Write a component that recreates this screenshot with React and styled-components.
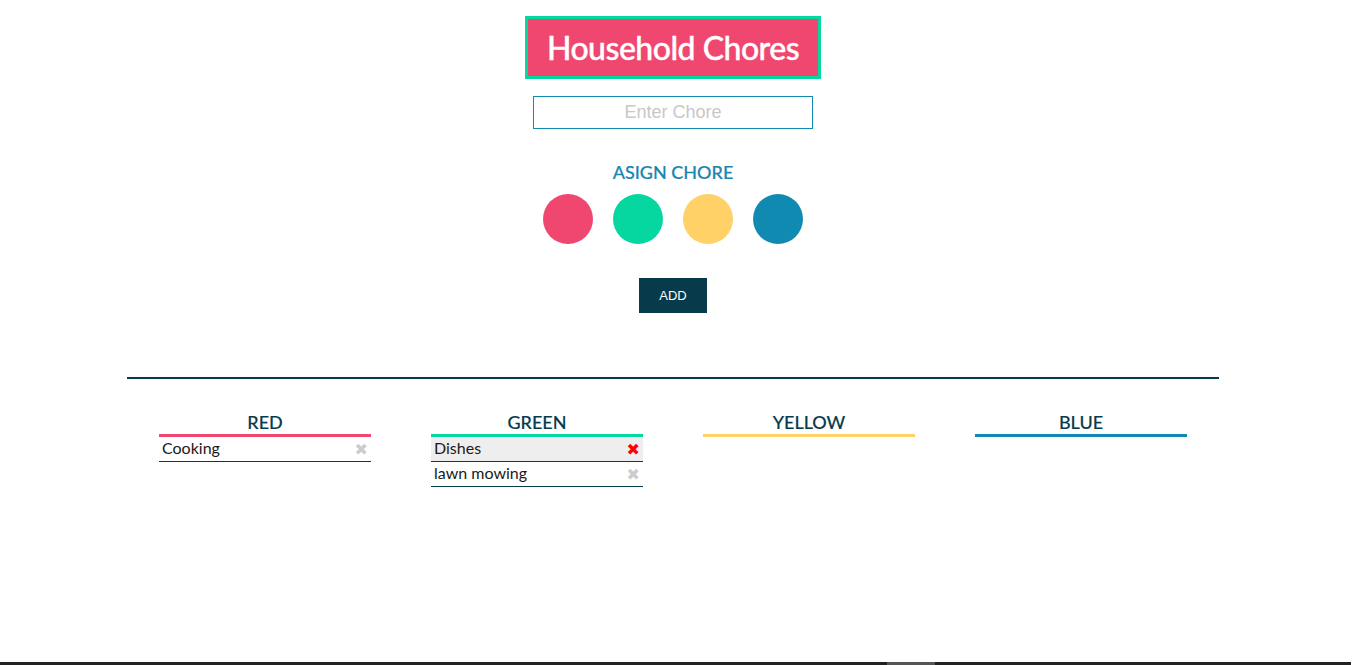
import React from "react";
import styled, {createGlobalStyle} from "styled-components";

const GlobalStyle = createGlobalStyle`
    body {
        margin: 0;
        background: #fff;
        font-family: Lato, "Noto Sans", sans-serif;
    }
`;

const swatches = [
    {name: "red", color: "#EF476F"},
    {name: "green", color: "#06D6A0"},
    {name: "yellow", color: "#FFD166"},
    {name: "blue", color: "#118AB2"},
];

const chores = {
    red: [{text: "Cooking"}],
    green: [{text: "Dishes", hover: true}, {text: "lawn mowing"}],
    yellow: [],
    blue: [],
};

function App() {
    return (
        <Page>
            <GlobalStyle/>
            <Header>
                <Title>Household Chores</Title>
                <ChoreInput type="text" placeholder="Enter Chore"/>
                <AssignLabel>ASIGN CHORE</AssignLabel>
                <SwatchRow>
                    {swatches.map((s) => (
                        <Swatch key={s.name} $color={s.color}/>
                    ))}
                </SwatchRow>
                <AddButton>ADD</AddButton>
            </Header>

            <Divider/>

            <Board>
                {swatches.map((s) => (
                    <Column key={s.name}>
                        <ColumnTitle $color={s.color}>{s.name.toUpperCase()}</ColumnTitle>
                        {chores[s.name].map((c) => (
                            <ChoreRow key={c.text} $hover={c.hover}>
                                <ChoreText>{c.text}</ChoreText>
                                <Remove $hover={c.hover}>✖</Remove>
                            </ChoreRow>
                        ))}
                    </Column>
                ))}
            </Board>

            <ScrollTrack>
                <ScrollThumb/>
            </ScrollTrack>
        </Page>
    );
}

export default App;

const Page = styled.div`
    width: 1346px;
    min-height: 665px;
`;

const Header = styled.header`
    display: flex;
    flex-direction: column;
    align-items: center;
    padding-top: 16px;
`;

const Title = styled.h1`
    margin: 0;
    height: 63px;
    box-sizing: border-box;
    display: flex;
    align-items: center;
    padding: 0 19px;
    background: #EF476F;
    border: 3px solid #06D6A0;
    color: #fff;
    font-size: 32px;
    font-weight: 500;
    letter-spacing: -0.5px;
    -webkit-text-stroke: 0.4px #fff;
`;

const ChoreInput = styled.input`
    margin-top: 17px;
    width: 280px;
    height: 33px;
    box-sizing: border-box;
    border: 1px solid #118AB2;
    outline: none;
    text-align: center;
    font-family: "Liberation Sans", Arial, sans-serif;
    font-size: 18px;

    &::placeholder {
        color: #c8c8c8;
    }
`;

const AssignLabel = styled.h3`
    margin: 33px 0 0;
    color: #1a86b0;
    font-size: 18px;
    font-weight: 500;
    line-height: 20px;
    -webkit-text-stroke: 0.2px #1a86b0;
`;

const SwatchRow = styled.div`
    display: flex;
    gap: 20px;
    margin-top: 12px;
`;

const Swatch = styled.div`
    width: 50px;
    height: 50px;
    border-radius: 50%;
    background: ${(p) => p.$color};
`;

const AddButton = styled.button`
    margin-top: 34px;
    width: 68px;
    height: 35px;
    border: none;
    background: #073B4C;
    color: #fff;
    font-family: "Liberation Sans", Arial, sans-serif;
    font-size: 13px;
`;

const Divider = styled.hr`
    width: 1092px;
    margin: 64px auto 0;
    border: none;
    border-top: 2px solid #073B4C;
`;

const Board = styled.div`
    width: 1092px;
    box-sizing: border-box;
    margin: 31px auto 0;
    padding: 0 32px;
    display: grid;
    grid-template-columns: repeat(4, 212px);
    gap: 60px;
    align-items: start;
`;

const Column = styled.div`
    display: flex;
    flex-direction: column;
`;

const ColumnTitle = styled.h4`
    margin: 0;
    text-align: center;
    color: #073B4C;
    font-size: 18px;
    font-weight: 500;
    line-height: 24px;
    -webkit-text-stroke: 0.15px #073B4C;
    border-bottom: 3px solid ${(p) => p.$color};
`;

const ChoreRow = styled.div`
    display: flex;
    justify-content: space-between;
    align-items: center;
    height: 24px;
    padding: 0 3px;
    border-bottom: 1px solid #073B4C;
    background: ${(p) => (p.$hover ? "#eeeeee" : "transparent")};
    color: #1a1a1a;
    font-size: 16px;
`;

const ChoreText = styled.span`
    padding-bottom: 3px;
`;

const Remove = styled.span`
    font-family: "DejaVu Sans", sans-serif;
    font-size: 16px;
    line-height: 1;
    padding-top: 1px;
    color: ${(p) => (p.$hover ? "#ff0000" : "#cccccc")};
`;

const ScrollTrack = styled.div`
    position: fixed;
    left: 0;
    bottom: 0;
    width: 1351px;
    height: 3px;
    background: #222;
`;

const ScrollThumb = styled.div`
    position: absolute;
    left: 887px;
    top: 0;
    width: 48px;
    height: 3px;
    background: #555;
`;
